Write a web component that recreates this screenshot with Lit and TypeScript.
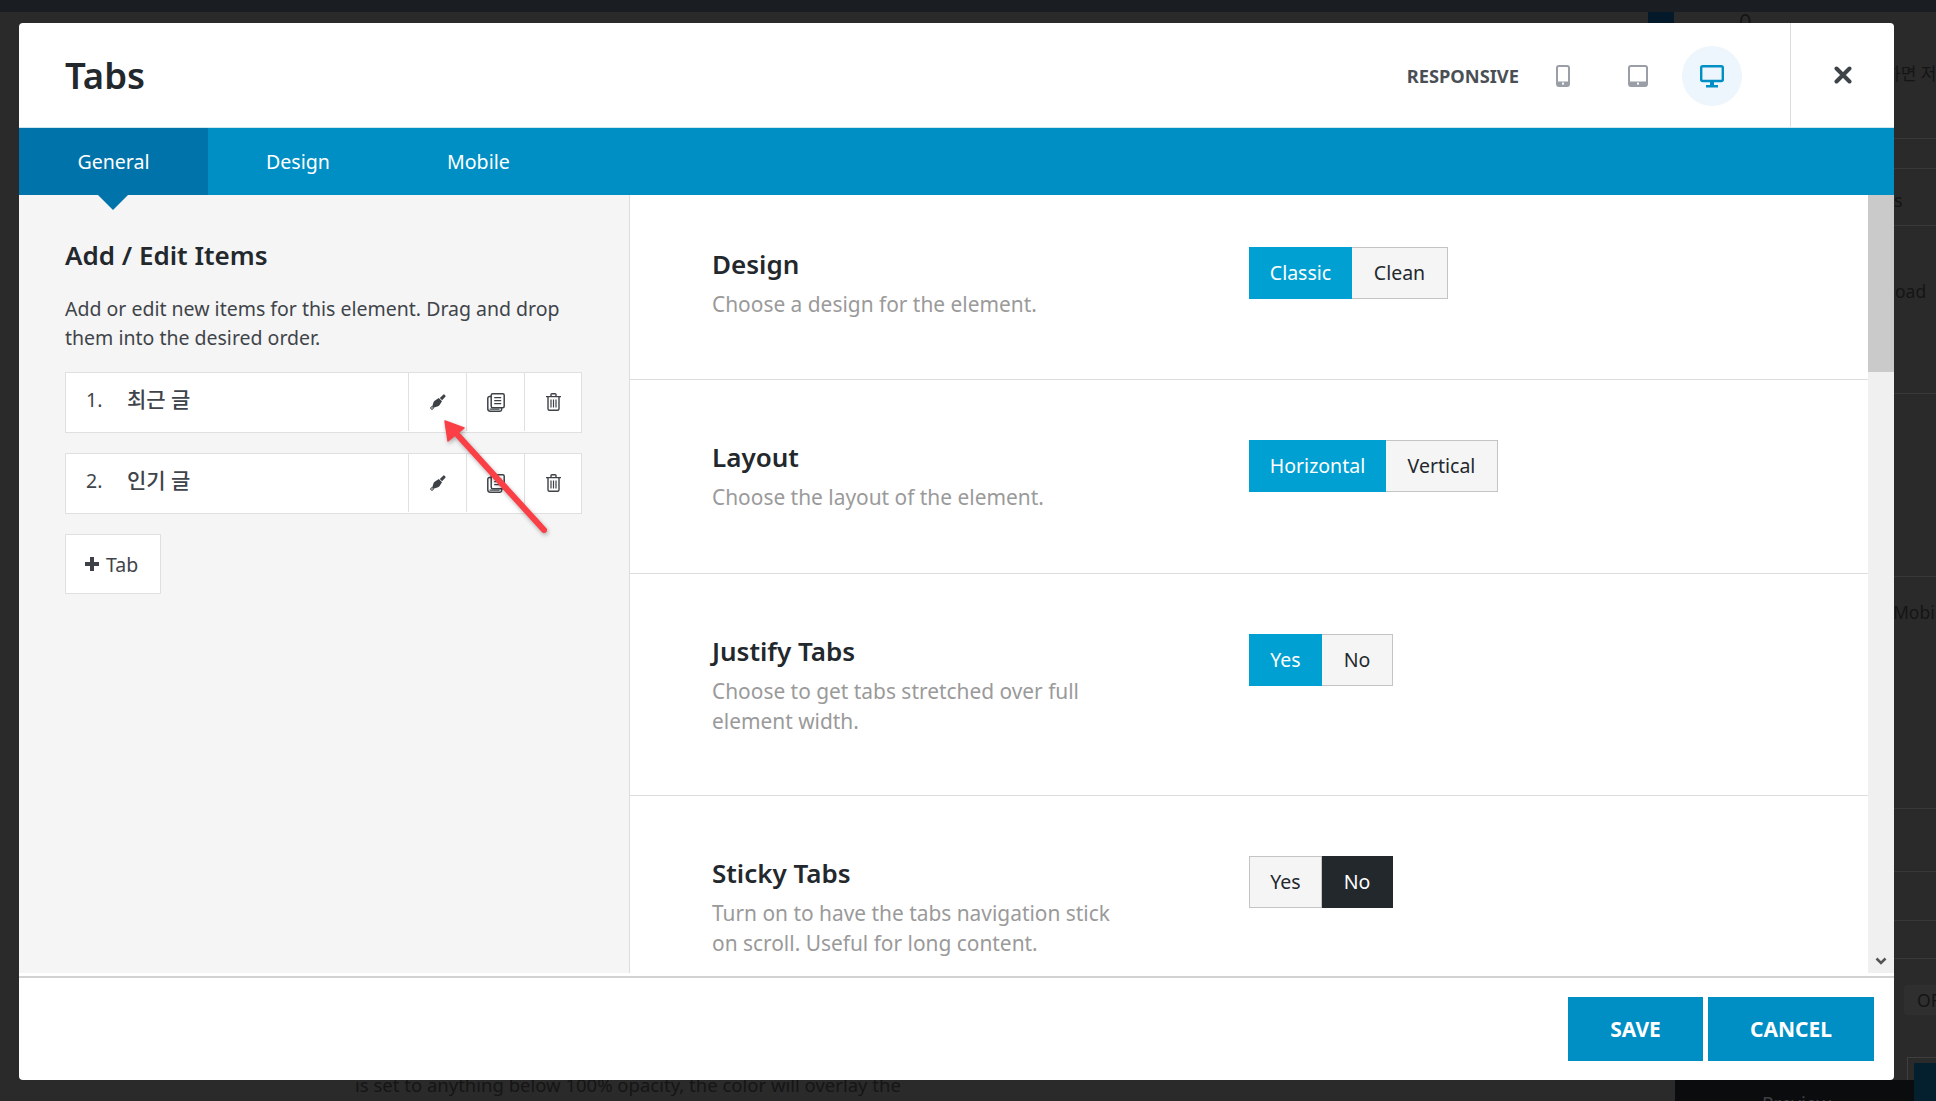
import { LitElement, html, css } from "lit";
import { customElement } from "lit/decorators.js";

const pen = html`<svg class="ic" width="16" height="16" viewBox="0 0 16 16"><path d="M9.8 3.9 13.2.7a1 1 0 0 1 1.4 0l.7.7a1 1 0 0 1 0 1.4L12.1 6.2Z" fill="#3e4247"/><path d="M8.8 4 12 7.2 9.6 11a3 3 0 0 1-1.6 1.3L3.5 13.8 2.2 12.5 3.6 8A3 3 0 0 1 5 6.4Z" fill="#3e4247"/><circle cx="2" cy="14" r="1.3" fill="#fff" stroke="#3e4247" stroke-width="1"/></svg>`;
const copy = html`<svg class="ic" width="18" height="19" viewBox="0 0 18 19" fill="none" stroke="#3e4247" stroke-width="1.5"><rect x="4.2" y="0.8" width="13" height="14" rx="1.5"/><path d="M4 3.4H2.6A1.8 1.8 0 0 0 .8 5.2v10.6a2.4 2.4 0 0 0 2.4 2.4h9.6a1.8 1.8 0 0 0 1.8-1.8V15"/><path d="M2.6 16.2h10M7.2 4.6h7M7.2 7.6h7M7.2 10.6h7" stroke-width="1.2"/></svg>`;
const trash = html`<svg class="ic" width="15" height="18" viewBox="0 0 15 18" fill="none" stroke="#3e4247" stroke-width="1.4"><path d="M0 3.6h15M5 3.4V1.6a.9.9 0 0 1 .9-.9h3.2a.9.9 0 0 1 .9.9v1.8M2 3.8v12a1.5 1.5 0 0 0 1.5 1.5h8a1.5 1.5 0 0 0 1.5-1.5v-12"/><path d="M5 6.5v8M7.5 6.5v8M10 6.5v8" stroke-width="1.2"/></svg>`;

const rows = [
  { t: "Design", d: "Choose a design for the element.", o: [["Classic", "on", 103], ["Clean", "", 96]] },
  { t: "Layout", d: "Choose the layout of the element.", o: [["Horizontal", "on", 137], ["Vertical", "", 112]] },
  { t: "Justify Tabs", d: "Choose to get tabs stretched over full element width.", o: [["Yes", "on", 73], ["No", "", 71]] },
  { t: "Sticky Tabs", d: "Turn on to have the tabs navigation stick on scroll. Useful for long content.", o: [["Yes", "", 73], ["No", "dark", 71]] },
];

const bgLines = [138, 168, 225, 393, 576, 808, 871, 920, 958];
const bgText: [string, number, number, number, string][] = [
  ["하면 저", 1885, 61, 17, "#151515"], ["s", 1894, 187, 18, "#151515"], ["oad", 1895, 278, 17.5, "#151515"], ["Mobil", 1893, 599, 17.5, "#151515"], ["OF", 1917, 987, 17.5, "#151515"],
  ["0", 1739, 8, 22, "#151515"], ["Preview", 1762, 1091, 19, "#3c3f42"],
  ["is set to anything below 100% opacity, the color will overlay the", 355, 1072, 18.5, "#151515"],
];

@customElement("app-root")
export class AppRoot extends LitElement {
  static styles = css`
    :host { display: block; position: relative; width: 100%; height: 1101px; overflow: hidden; background: #2a2a2a; font-family: "Noto Sans", "Noto Sans CJK KR", sans-serif; color: #23282d; }
    * { box-sizing: border-box; }
    .backdrop { position: absolute; inset: 0; }
    .topbar { position: absolute; left: 0; right: 0; top: 0; height: 12px; background: #1a1e23; }
    .navy { position: absolute; left: 1648px; top: 12px; width: 26px; height: 11px; background: #04192a; }
    .bl { position: absolute; left: 1894px; right: 0; height: 1px; background: #383838; }
    .bt { position: absolute; white-space: nowrap; line-height: 26px; }
    .pill { position: absolute; left: 1904px; width: 60px; top: 985px; height: 30px; border-radius: 4px; background: #2f2f2f; }
    .box { position: absolute; left: 1907px; width: 60px; top: 1057px; height: 30px; border: 1px solid #3e3e3e; }
    .darkp { position: absolute; left: 1675px; right: 0; top: 1080px; bottom: 0; background: #0a0c0e; }
    .bluep { position: absolute; left: 1914px; right: 0; top: 1063px; bottom: 0; background: #04202f; }
    .modal { position: absolute; left: 19px; top: 23px; width: 1875px; height: 1057px; background: #fff; border-radius: 4px; display: flex; flex-direction: column; overflow: hidden; }
    header { height: 105px; flex: none; display: flex; align-items: stretch; border-bottom: 1px solid #cfe6f2; padding-left: 46px; }
    h1 { margin: 0; flex: 1; font-size: 36.5px; font-weight: 600; line-height: 105px; color: #23282d; }
    .resp { align-self: center; font-size: 18.3px; font-weight: 700; color: #4a4f55; margin-right: 37px; margin-top: 0; }
    .dev { align-self: center; display: flex; align-items: center; justify-content: center; flex: none; margin-top: 2px; }
    .phone { width: 14px; margin-right: 58px; }
    .tablet { width: 20px; margin-right: 34px; }
    .desk { width: 60px; height: 60px; border-radius: 50%; background: #edf6fc; margin-right: 48px; }
    .close { width: 104px; flex: none; border-left: 1px solid #ddd; display: flex; align-items: center; justify-content: center; }
    nav { height: 67px; flex: none; background: #008fc5; display: flex; color: #fff; font-size: 19.6px; line-height: 68px; }
    nav div { padding: 0 58px; position: relative; }
    nav div:last-child { padding-left: 59px; }
    nav .act { background: #0073aa; width: 189px; text-align: center; padding: 0; }
    nav .act::after { content: ""; position: absolute; left: 79px; top: 67px; border: 15px solid transparent; border-top-color: #0073aa; border-bottom-width: 0; }
    .body { height: 778px; flex: none; display: flex; overflow: hidden; }
    .left { width: 611px; flex: none; background: #f5f5f5; border-right: 1px solid #ddd; padding: 43px 40px 0 46px; }
    h2 { margin: 0 0 22px; font-size: 26px; font-weight: 600; line-height: 34px; color: #23282d; }
    .lede { margin: 0 0 20px; font-size: 19.5px; line-height: 29px; color: #3f444a; }
    .item { height: 61px; width: 517px; margin-bottom: 20px; background: #fff; border: 1px solid #e0e0e0; display: flex; align-items: stretch; color: #3f444a; font-size: 19.5px; }
    .n { width: 61px; padding-left: 20px; line-height: 54px; }
    .lab { flex: 1; font-size: 21px; font-weight: 500; line-height: 52px; }
    .act-i { flex: none; width: 58px; border-left: 1px solid #e0e0e0; display: flex; align-items: center; justify-content: center; margin-bottom: 1px; }
    .act-i:last-child { width: 57px; }
    .add { display: flex; align-items: center; gap: 7px; width: 96px; height: 60px; background: #fff; border: 1px solid #e0e0e0; padding-left: 19px; font-size: 19.5px; color: #3f444a; }
    .right { flex: 1; min-width: 0; overflow: hidden; }
    section { padding: 60px 0 0 82px; display: flex; }
    section.s0 { padding-top: 52px; height: 185px; border-bottom: 1px solid #ddd; }
    section.s1 { height: 194px; border-bottom: 1px solid #ddd; }
    section.s2 { height: 222px; border-bottom: 1px solid #ddd; }
    section.s3 { height: 240px; }
    .lc { width: 537px; flex: none; margin-top: -7px; }
    h3 { margin: 0; font-size: 26px; font-weight: 600; line-height: 49px; color: #23282d; }
    .d { margin: 0; max-width: 415px; font-size: 20.9px; line-height: 30px; color: #9a9a9a; }
    .seg { display: flex; height: 52px; font-size: 19.5px; }
    .seg span { display: flex; align-items: center; justify-content: center; background: #f5f5f5; border: 1px solid #c4c4c4; color: #23282d; border-left-width: 0; padding-bottom: 2px; }
    .seg span:first-child { border-left-width: 1px; }
    .seg span.on { background: #00a0d2; border-color: #00a0d2; color: #fff; }
    .seg span.dark { background: #23282d; border-color: #23282d; color: #fff; }
    .sb { width: 26px; flex: none; background: #f0f0f0; position: relative; }
    .thumb { height: 177px; background: #cacaca; }
    .chev { position: absolute; left: 7px; bottom: 8px; }
    footer { flex: 1; margin-top: 3px; border-top: 2px solid #d2d2d2; display: flex; justify-content: flex-end; gap: 5px; padding: 19px 20px 0 0; }
    .btn { height: 64px; background: #008fc5; color: #fff; font-size: 21px; font-weight: 700; display: flex; align-items: center; justify-content: center; }
    .arrow { position: absolute; left: 430px; top: 410px; filter: drop-shadow(1px 2px 2px rgba(0,0,0,.3)); }
  `;

  render() {
    return html`
      <div class="backdrop">
        <div class="topbar"></div><div class="navy"></div>
        ${bgLines.map((y) => html`<div class="bl" style="top:${y}px"></div>`)}
        <div class="pill"></div><div class="box"></div>
        <div class="darkp"></div><div class="bluep"></div>
        ${bgText.map(([s, x, y, f, c]) => html`<div class="bt" style="left:${x}px;top:${y}px;font-size:${f}px;color:${c}">${s}</div>`)}
      </div>
      <div class="modal">
        <header>
          <h1>Tabs</h1>
          <div class="resp">RESPONSIVE</div>
          <div class="dev phone"><svg width="14" height="22" viewBox="0 0 14 22"><rect x="1" y="1" width="12" height="20" rx="2" fill="none" stroke="#9a9ea6" stroke-width="2"/><path d="M1 16.5h12V21H1z" fill="#9a9ea6"/><rect x="6" y="17.6" width="2" height="2" fill="#fff"/></svg></div>
          <div class="dev tablet"><svg width="20" height="22" viewBox="0 0 20 22"><rect x="1" y="1" width="18" height="20" rx="2" fill="none" stroke="#9a9ea6" stroke-width="2"/><path d="M1 16.5h18V21H1z" fill="#9a9ea6"/><rect x="9" y="17.6" width="2" height="2" fill="#fff"/></svg></div>
          <div class="dev desk"><svg width="24" height="23" viewBox="0 0 24 23"><rect x="1.2" y="1.2" width="21.6" height="14.8" rx="1.5" fill="none" stroke="#008fc5" stroke-width="2.4"/><path d="M10 17h4v3h-4zM6 20h12v2.4H6z" fill="#008fc5"/></svg></div>
          <div class="close"><svg width="18" height="18" viewBox="0 0 18 18"><path d="M2.5 2.5l13 13M15.5 2.5l-13 13" stroke="#3e4348" stroke-width="4" stroke-linecap="round"/></svg></div>
        </header>
        <nav><div class="act">General</div><div>Design</div><div>Mobile</div></nav>
        <div class="body">
          <div class="left">
            <h2>Add / Edit Items</h2>
            <p class="lede">Add or edit new items for this element. Drag and drop them into the desired order.</p>
            ${[["1.", "최근 글"], ["2.", "인기 글"]].map(([n, l]) => html`
              <div class="item"><div class="n">${n}</div><div class="lab">${l}</div>
                <div class="act-i">${pen}</div><div class="act-i">${copy}</div><div class="act-i">${trash}</div></div>`)}
            <div class="add"><svg width="14" height="14" viewBox="0 0 14 14"><path d="M7 0.5v13M0.5 7h13" stroke="#3e4247" stroke-width="4" stroke-linecap="round"/></svg>Tab</div>
          </div>
          <div class="right">
            ${rows.map((r, i) => html`
              <section class="s${i}">
                <div class="lc"><h3>${r.t}</h3><p class="d">${r.d}</p></div>
                <div class="seg">${r.o.map(([l, c, w]) => html`<span class="${c}" style="width:${w}px">${l}</span>`)}</div>
              </section>`)}
          </div>
          <div class="sb"><div class="thumb"></div>
            <svg class="chev" width="12" height="8" viewBox="0 0 12 8"><path d="M1.5 1.5 6 6l4.5-4.5" fill="none" stroke="#555" stroke-width="2.6"/></svg></div>
        </div>
        <footer><div class="btn" style="width:135px">SAVE</div><div class="btn" style="width:166px">CANCEL</div></footer>
      </div>
      <svg class="arrow" width="130" height="135" viewBox="430 410 130 135">
        <path d="M544 530 454 431" stroke="#fb3f46" stroke-width="6" stroke-linecap="round"/>
        <path d="M445 421 464 428 448 441Z" fill="#fb3f46" stroke="#fb3f46" stroke-width="1.5" stroke-linejoin="round"/>
      </svg>
    `;
  }
}
